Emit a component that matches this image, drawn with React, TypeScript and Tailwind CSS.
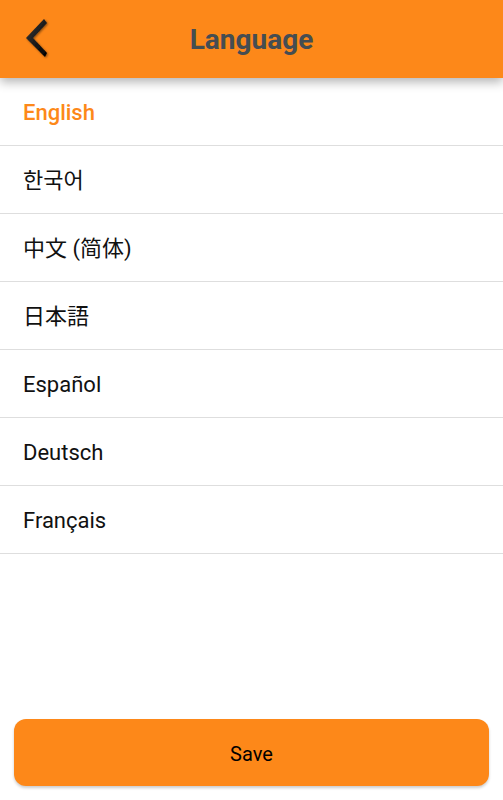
import React from "react";

const langs = ["English", "한국어", "中文 (简体)", "日本語", "Español", "Deutsch", "Français"];

export default function App() {
  return (
    <div
      className="flex h-[800px] w-[503px] flex-col bg-white"
      style={{ fontFamily: 'Roboto, "Noto Sans CJK KR", "Noto Sans CJK SC", "Noto Sans CJK JP", sans-serif' }}
    >
      <div className="relative z-10 flex h-[78px] shrink-0 items-center justify-center bg-[#fd8819] pt-[2px] shadow-[0_4px_10px_rgba(0,0,0,0.3)]">
        <svg className="absolute left-[20px] top-[14px]" width="34" height="50" viewBox="0 0 34 50">
          <defs>
            <linearGradient id="g" x1="0" y1="0" x2="1" y2="1">
              <stop offset="0" stopColor="#3a3a3a" />
              <stop offset="1" stopColor="#000" />
            </linearGradient>
            <filter id="s" x="-50%" y="-50%" width="200%" height="200%">
              <feDropShadow dx="1" dy="1" stdDeviation="1" floodColor="#000" floodOpacity="0.45" />
            </filter>
          </defs>
          <polygon points="24,5 27,9 13,24 27,39 25,43 6,24" fill="url(#g)" filter="url(#s)" />
        </svg>
        <span className="text-[28px] font-bold text-[#454d52]">Language</span>
      </div>
      <div className="flex flex-col">
        {langs.map((l, i) => (
          <div
            key={l}
            className={`flex h-[68px] items-center border-b border-[#dedede] pl-[23px] pt-[2px] text-[22px] ${
              i === 0 ? "font-medium text-[#fd8819]" : "text-[#111]"
            }`}
          >
            {l}
          </div>
        ))}
      </div>
      <div className="flex-1" />
      <div className="px-[14px] pb-[14px]">
        <button className="flex h-[67px] w-full items-center justify-center rounded-[12px] bg-[#fd8819] pt-[2px] text-[20px] font-normal text-black shadow-[0_2px_3px_rgba(0,0,0,0.2)]">
          Save
        </button>
      </div>
    </div>
  );
}
